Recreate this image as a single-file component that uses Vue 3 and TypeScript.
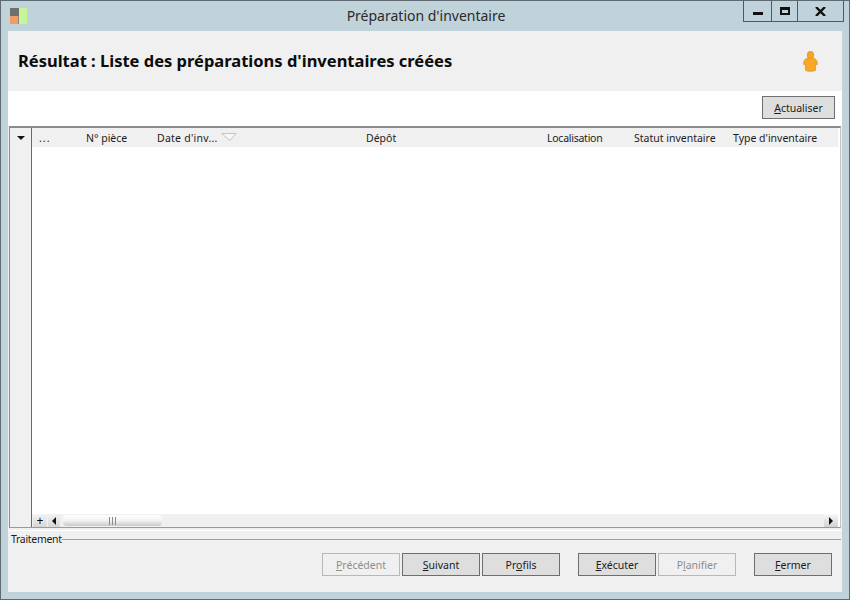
<script setup lang="ts">
interface Column { label: string; width: number; sorted?: boolean }
interface Action { before: string; key: string; after: string; disabled?: boolean; gapAfter?: number }

const columns: Column[] = [
  { label: '...', width: 47 },
  { label: 'N° pièce', width: 71 },
  { label: "Date d'inv...", width: 209, sorted: true },
  { label: 'Dépôt', width: 181 },
  { label: 'Localisation', width: 87 },
  { label: 'Statut inventaire', width: 99 },
  { label: "Type d'inventaire", width: 105 },
]

const actions: Action[] = [
  { before: '', key: 'P', after: 'récédent', disabled: true },
  { before: '', key: 'S', after: 'uivant' },
  { before: 'Pr', key: 'o', after: 'fils', gapAfter: 18 },
  { before: '', key: 'E', after: 'xécuter' },
  { before: 'P', key: 'l', after: 'anifier', disabled: true, gapAfter: 18 },
  { before: '', key: 'F', after: 'ermer' },
]
</script>

<template>
  <div class="window">
    <header class="titlebar">
      <svg class="app-icon" width="17" height="16" viewBox="0 0 17 16">
        <rect x="0" y="0" width="9" height="8" fill="#6f6f6f" />
        <rect x="0" y="8" width="9" height="8" fill="#f49a66" />
        <rect x="9" y="0" width="8" height="16" fill="#c8f59a" />
        <rect x="8" y="8" width="1" height="8" fill="#8a8a78" />
      </svg>
      <div class="caption">Préparation d'inventaire</div>
      <div class="controls">
        <div class="ctl ctl-min"><span class="min-glyph"></span></div>
        <div class="ctl ctl-max"><span class="max-glyph"></span></div>
        <div class="ctl ctl-close">
          <svg width="11" height="9" viewBox="0 0 11 9"><path d="M1 0 L10 9 M10 0 L1 9" stroke="#111" stroke-width="2.4" fill="none" /></svg>
        </div>
      </div>
    </header>

    <main class="client">
      <section class="banner">
        <h1 class="heading">Résultat : Liste des préparations d'inventaires créées</h1>
        <svg class="person" width="15" height="21" viewBox="0 0 15 21">
          <ellipse cx="7.5" cy="4.2" rx="3.3" ry="3.9" fill="#f5a623" stroke="#d8952c" stroke-width="0.7" />
          <path d="M3.5 7.5 C5 7 10 7 11.5 7.5 C13.5 8.2 14.6 10.5 14.4 13.5 L12.6 13.8 L12.4 19.6 C10 20.6 5 20.6 2.6 19.6 L2.4 13.8 L0.6 13.5 C0.4 10.5 1.5 8.2 3.5 7.5 Z" fill="#f9a825" stroke="#d8952c" stroke-width="0.7" />
        </svg>
      </section>

      <section class="toolbar">
        <button class="btn btn-refresh" type="button"><u>A</u>ctualiser</button>
      </section>

      <section class="grid">
        <aside class="gutter">
          <div class="gutter-head"><span class="down-tri"></span></div>
        </aside>
        <div class="grid-main">
          <div class="grid-head">
            <div v-for="c in columns" :key="c.label" class="col" :style="{ width: c.width + 'px' }">
              <span>{{ c.label }}</span>
              <svg v-if="c.sorted" class="sort" width="16" height="8" viewBox="0 0 16 8">
                <path d="M0.5 0.5 H15 L9 7.5 Z" fill="#f7f7f7" stroke="#c4c4c4" stroke-width="1" />
              </svg>
            </div>
          </div>
          <div class="grid-body"></div>
          <div class="grid-foot">
            <span class="plus">+</span>
            <div class="scroll">
              <span class="arrow-btn"><span class="tri-left"></span></span>
              <div class="track">
                <div class="thumb"><span class="grip"></span></div>
              </div>
              <span class="arrow-btn arrow-right"><span class="tri-right"></span></span>
            </div>
          </div>
        </div>
      </section>

      <section class="process">
        <div class="legend">
          <span class="legend-text">Traitement</span>
          <span class="legend-line"></span>
        </div>
        <div class="actions">
          <button
            v-for="a in actions"
            :key="a.after"
            type="button"
            class="btn"
            :class="{ 'is-disabled': a.disabled }"
            :style="{ marginRight: (a.gapAfter ?? 2) + 'px' }"
          >{{ a.before }}<u>{{ a.key }}</u>{{ a.after }}</button>
        </div>
      </section>
    </main>
  </div>
</template>

<style>
html, body { margin: 0; padding: 0; }
</style>

<style scoped>
.window {
  width: 850px;
  height: 600px;
  box-sizing: border-box;
  background: #c0d3da;
  border: 1px solid #5e6b72;
  display: flex;
  flex-direction: column;
  font-family: "Noto Sans", "Open Sans", sans-serif;
  font-size: 10.5px;
  color: #1c1c1c;
  overflow: hidden;
}
.titlebar {
  height: 30px;
  flex: none;
  display: grid;
  grid-template-columns: 1fr auto 1fr;
  align-items: start;
  padding: 0 5px 0 9px;
}
.app-icon { margin-top: 7px; }
.caption {
  font-size: 14px;
  line-height: 30px;
  color: #2a2a2a;
  transform: translateX(-1px);
}
.controls {
  justify-self: end;
  display: flex;
  height: 21px;
  box-sizing: border-box;
  border: 1px solid #4f5a60;
  border-top: none;
}
.ctl {
  display: flex;
  align-items: center;
  justify-content: center;
  box-sizing: border-box;
}
.ctl-min { width: 28px; border-right: 1px solid #4f5a60; }
.ctl-max { width: 26px; border-right: 1px solid #4f5a60; }
.ctl-close { width: 45px; }
.min-glyph { width: 10px; height: 3px; background: #111; margin-top: 5px; }
.max-glyph { width: 10px; height: 8px; box-sizing: border-box; border: 2px solid #111; border-top-width: 3px; }
.client {
  flex: 1;
  margin: 0 7px 7px 7px;
  background: #f0f0f0;
  display: flex;
  flex-direction: column;
  min-height: 0;
}
.banner {
  height: 60px;
  flex: none;
  display: flex;
  align-items: center;
  justify-content: space-between;
  padding: 0 24px 0 10px;
  box-sizing: border-box;
}
.heading {
  margin: 0 0 2px;
  font-family: "Noto Sans", sans-serif;
  font-size: 16.5px;
  font-weight: 700;
  color: #0c0c0c;
}
.person { margin-top: 1px; }
.toolbar {
  height: 35px;
  flex: none;
  background: #fff;
  display: flex;
  justify-content: flex-end;
  align-items: flex-start;
  padding: 5px 7px 0 0;
  box-sizing: border-box;
}
.btn {
  width: 78px;
  height: 23px;
  box-sizing: border-box;
  padding: 0;
  font: inherit;
  color: #1c1c1c;
  background: #dedede;
  border: 1px solid #6e6e6e;
  border-radius: 0;
  text-align: center;
}
.btn-refresh { width: 73px; }
.is-disabled {
  background: #f0f0f0;
  border-color: #b8b8b8;
  color: #8d8d8d;
}
.grid {
  height: 402px;
  flex: none;
  margin-left: 1px;
  margin-right: 1px;
  background: #fff;
  border-top: 2px solid #8c8c8c;
  border-left: 1px solid #8c8c8c;
  border-right: 1px solid #c4c4c4;
  border-bottom: 1px solid #9a9a9a;
  display: flex;
  box-sizing: border-box;
}
.gutter {
  width: 21px;
  flex: none;
  background: #f0f0f0;
  border-right: 1px solid #6a6a6a;
}
.gutter-head {
  height: 19px;
  display: flex;
  align-items: center;
  justify-content: center;
}
.down-tri {
  width: 0;
  height: 0;
  border-left: 4px solid transparent;
  border-right: 4px solid transparent;
  border-top: 4px solid #111;
}
.grid-main {
  flex: 1;
  min-width: 0;
  display: flex;
  flex-direction: column;
}
.grid-head {
  height: 19px;
  box-sizing: border-box;
  flex: none;
  display: flex;
  background: #f0f0f0;
  margin-right: 2px;
  align-items: center;
  padding: 1px 0 0 7px;
  overflow: hidden;
}
.col {
  flex: none;
  display: flex;
  align-items: center;
  gap: 3px;
  white-space: nowrap;
  line-height: 18px;
}
.col:nth-child(1) { letter-spacing: 1px; }
.col:nth-child(3) { letter-spacing: 0.25px; }
.col:nth-child(5) { letter-spacing: -0.25px; }
.sort { margin-top: -3px; }
.grid-body { flex: 1; background: #fff; }
.grid-foot {
  height: 13px;
  flex: none;
  display: flex;
  background: #f0f0f0;
  margin-right: 2px;
}
.plus {
  width: 14px;
  margin-left: 1px;
  text-align: center;
  font-size: 12px;
  line-height: 13px;
  color: #111;
  background: linear-gradient(#f4f4f4, #d6d6d6);
}
.scroll { flex: 1; display: flex; margin-left: 1px; min-width: 0; }
.arrow-btn {
  width: 12px;
  flex: none;
  display: flex;
  align-items: center;
  justify-content: center;
  background: linear-gradient(#f2f2f2, #d6d6d6);
}
.arrow-right { width: 14px; background: linear-gradient(#f8f8f8, #d2d2d2); }
.tri-left {
  border-top: 4px solid transparent;
  border-bottom: 4px solid transparent;
  border-right: 4px solid #111;
}
.tri-right {
  border-top: 4px solid transparent;
  border-bottom: 4px solid transparent;
  border-left: 4px solid #111;
}
.track { flex: 1; min-width: 0; padding: 1px 0 0 3px; }
.thumb {
  width: 99px;
  height: 11px;
  border-radius: 4px;
  background: linear-gradient(#ffffff, #f2f2f2 50%, #c9c9c9);
  display: flex;
  align-items: center;
  justify-content: center;
}
.grip {
  width: 7px;
  height: 8px;
  background: repeating-linear-gradient(90deg, #8a8a8a 0 1px, transparent 1px 3px);
}
.process {
  flex: 1;
  min-height: 0;
  margin-top: 2px;
  border-top: 1px solid #fff;
  display: flex;
  flex-direction: column;
}
.legend {
  display: flex;
  align-items: center;
  height: 14px;
  margin-top: 1px;
  padding-left: 3px;
}
.legend-text { line-height: 14px; letter-spacing: -0.3px; }
.legend-line { flex: 1; height: 1px; background: #a0a0a0; margin-right: 1px; }
.actions {
  display: flex;
  justify-content: flex-end;
  margin-top: 7px;
  padding-right: 10px;
}
.actions .btn:last-child { margin-right: 0 !important; }
</style>
